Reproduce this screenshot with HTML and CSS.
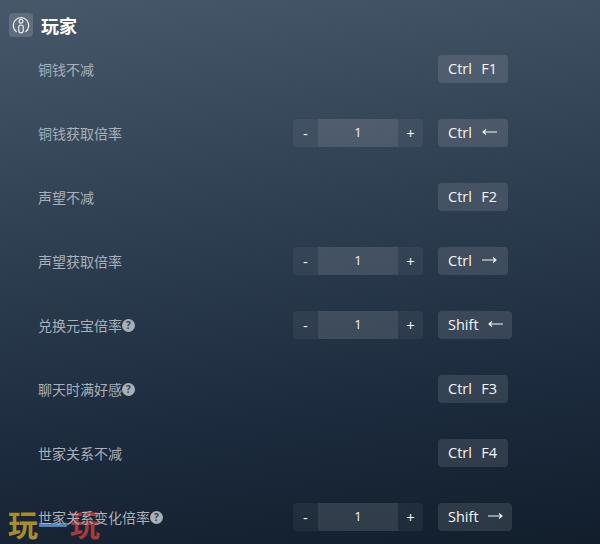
FILE: index.html
```html
<!DOCTYPE html>
<html lang="zh-CN">
<head>
    <meta charset="UTF-8">
    <title>玩家</title>
    <link rel="stylesheet" href="styles.css">
</head>
<body>

<!-- watermark sits under the last row -->
<div class="watermark"><span class="wm-gold">玩</span><span class="wm-blue">一</span><span class="wm-red">玩</span></div>

<div class="panel">
    <div class="panel-head">
        <span class="head-icon">
            <svg width="20" height="20" viewBox="0 0 18 18" fill="none" stroke="#e8ebee" stroke-width="1.1">
                <path d="M5 15.2A7 7 0 1 1 13 15.2"/>
                <circle cx="9" cy="5.6" r="1.7"/>
                <rect x="7" y="9" width="4" height="7" rx="2"/>
            </svg>
        </span>
        <h3>玩家</h3>
    </div>

    <div class="row">
        <span class="label">铜钱不减</span>
        <span class="key"><span>Ctrl</span><span>F1</span></span>
    </div>

    <div class="row">
        <span class="label">铜钱获取倍率</span>
        <div class="stepper"><button>-</button><span class="value">1</span><button>+</button></div>
        <span class="key"><span>Ctrl</span><svg class="arrow" width="15" height="8" viewBox="0 0 15 8"><path d="M15 4H1M4 1.5L1 4l3 2.5"/></svg></span>
    </div>

    <div class="row">
        <span class="label">声望不减</span>
        <span class="key"><span>Ctrl</span><span>F2</span></span>
    </div>

    <div class="row">
        <span class="label">声望获取倍率</span>
        <div class="stepper"><button>-</button><span class="value">1</span><button>+</button></div>
        <span class="key"><span>Ctrl</span><svg class="arrow" width="15" height="8" viewBox="0 0 15 8"><path d="M0 4h14M11 1.5L14 4l-3 2.5"/></svg></span>
    </div>

    <div class="row">
        <span class="label">兑换元宝倍率<i class="help">?</i></span>
        <div class="stepper"><button>-</button><span class="value">1</span><button>+</button></div>
        <span class="key key-wide"><span>Shift</span><svg class="arrow" width="15" height="8" viewBox="0 0 15 8"><path d="M15 4H1M4 1.5L1 4l3 2.5"/></svg></span>
    </div>

    <div class="row">
        <span class="label">聊天时满好感<i class="help">?</i></span>
        <span class="key"><span>Ctrl</span><span>F3</span></span>
    </div>

    <div class="row">
        <span class="label">世家关系不减</span>
        <span class="key"><span>Ctrl</span><span>F4</span></span>
    </div>

    <div class="row">
        <span class="label">世家关系变化倍率<i class="help">?</i></span>
        <div class="stepper"><button>-</button><span class="value">1</span><button>+</button></div>
        <span class="key key-wide"><span>Shift</span><svg class="arrow" width="15" height="8" viewBox="0 0 15 8"><path d="M0 4h14M11 1.5L14 4l-3 2.5"/></svg></span>
    </div>
</div>

</body>
</html>
```

FILE: styles.css
```css
html, body {
    margin: 0;
    padding: 0;
}

body {
    width: 600px;
    height: 544px;
    overflow: hidden;
    position: relative;
    font-family: "Open Sans", "Noto Sans CJK SC", sans-serif;
    background: linear-gradient(172deg, #47586b 0%, #2f3f52 40%, #1c2b3e 72%, #121e2c 100%);
}

.panel {
    position: relative;
    padding: 13px 88px 0 9px;
}

.panel-head {
    display: flex;
    align-items: center;
    gap: 8px;
    height: 24px;
}

.head-icon {
    width: 24px;
    height: 24px;
    border-radius: 4px;
    background: #5f6d7c;
    display: flex;
    align-items: center;
    justify-content: center;
}

.panel-head h3 {
    margin: 0;
    color: #fff;
    font-family: "Noto Sans CJK SC", sans-serif;
    font-size: 18px;
    font-weight: 700;
}

.row {
    display: grid;
    grid-template-columns: 1fr 130px 74px;
    column-gap: 15px;
    align-items: center;
    height: 64px;
    padding-left: 29px;
}

.label {
    grid-column: 1;
    display: flex;
    align-items: center;
    color: #a9b0b7;
    font-family: "Noto Sans CJK SC", sans-serif;
    font-size: 14px;
    white-space: nowrap;
}

.help {
    width: 13px;
    height: 13px;
    border-radius: 50%;
    background: #a9afb6;
    color: #33414f;
    font-family: "Open Sans", sans-serif;
    font-size: 10px;
    font-style: normal;
    font-weight: 700;
    line-height: 13px;
    text-align: center;
}

.stepper {
    grid-column: 2;
    display: flex;
    height: 28px;
    border-radius: 4px;
    overflow: hidden;
    background: rgba(255, 255, 255, 0.05);
}

.stepper button {
    width: 25px;
    padding: 0;
    border: none;
    background: none;
    color: #f4f5f6;
    font-family: "Open Sans", sans-serif;
    font-size: 15px;
}

.value {
    width: 80px;
    background: rgba(255, 255, 255, 0.08);
    color: #f4f5f6;
    font-size: 13px;
    line-height: 27px;
    text-align: center;
}

.key {
    grid-column: 3;
    justify-self: start;
    box-sizing: border-box;
    width: 70px;
    display: flex;
    align-items: center;
    justify-content: space-between;
    height: 28px;
    padding: 0 11px 2px 10px;
    border-radius: 4px;
    background: rgba(255, 255, 255, 0.11);
    color: #f4f5f6;
    font-size: 14.5px;
    white-space: nowrap;
}

.key-wide {
    width: 74px;
    padding-right: 9px;
}

.arrow {
    fill: none;
    stroke: #f4f5f6;
    stroke-width: 1.1;
}

.watermark {
    position: absolute;
    left: 8px;
    bottom: 4px;
    display: flex;
    font-family: "Noto Sans CJK SC", sans-serif;
    font-size: 30px;
    font-weight: 700;
    line-height: 34px;
}

.wm-gold { color: #a98c2b; }
.wm-blue { color: #4a86c0; }
.wm-red { color: #a83a3c; margin-left: 2px; }
```
